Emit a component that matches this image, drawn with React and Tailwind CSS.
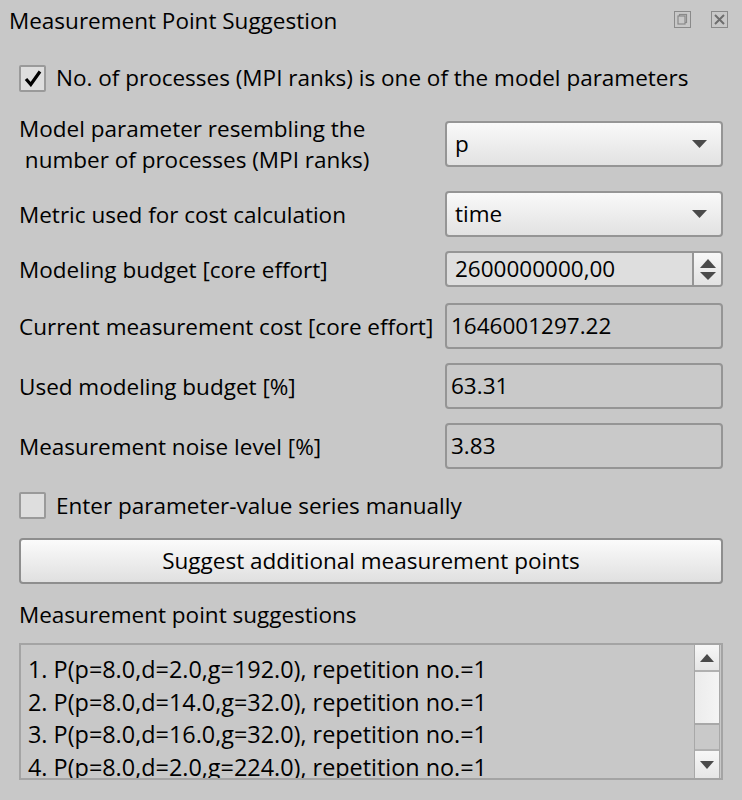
import React from "react";

const font = { fontFamily: '"Open Sans", "Noto Sans", sans-serif' };

function Combo({ value, className = "" }) {
  return (
    <div className={"flex items-center justify-between h-[46px] w-[278px] rounded-[4px] border-2 border-[#959595] bg-gradient-to-b from-[#f9f9f9] to-[#e2e2e2] pl-[8px] pr-[14px] " + className}>
      <span className="text-[22.5px] text-black leading-none">{value}</span>
      <svg width="15" height="8" viewBox="0 0 15 8"><path d="M0 0H15L7.5 8Z" fill="#4a4a4a" /></svg>
    </div>
  );
}

function ReadOnly({ value, className = "" }) {
  return (
    <div className={"flex items-center h-[46px] w-[278px] rounded-[4px] border-2 border-[#959595] bg-[#c9c9c9] pl-[4px] " + className}>
      <span className="text-[22.5px] text-black leading-none">{value}</span>
    </div>
  );
}

function Row({ label, children, className = "" }) {
  return (
    <div className={"flex items-center justify-between " + className}>
      <div className="text-[22.5px] text-black leading-[31px]">{label}</div>
      {children}
    </div>
  );
}

export default function App() {
  return (
    <div className="w-[742px] h-[800px] bg-[#c8c8c8] overflow-hidden" style={font}>
      {/* title bar */}
      <div className="flex items-center justify-between h-[42px] pl-[9px] pr-[14px]">
        <div className="text-[22.5px] text-black leading-[30px]">Measurement Point Suggestion</div>
        <div className="flex items-center gap-[20px] mt-[-4px]">
          <svg width="17" height="17" viewBox="0 0 17 17">
            <rect x="0.5" y="0.5" width="16" height="16" fill="none" stroke="#8a8a8a" strokeWidth="1" />
            <rect x="5.5" y="3.5" width="7" height="8" fill="none" stroke="#8a8a8a" strokeWidth="1.2" />
            <rect x="4" y="5" width="7" height="8" fill="#c8c8c8" stroke="#8a8a8a" strokeWidth="1.2" />
          </svg>
          <svg width="17" height="17" viewBox="0 0 17 17">
            <rect x="0.5" y="0.5" width="16" height="16" fill="none" stroke="#8a8a8a" strokeWidth="1" />
            <path d="M4 4L13 13M13 4L4 13" stroke="#6e6e6e" strokeWidth="2" />
          </svg>
        </div>
      </div>

      <div className="flex flex-col px-[19px]">
        {/* checkbox 1 */}
        <div className="flex items-center mt-[22px] h-[28px]">
          <div className="w-[27px] h-[27px] rounded-[2px] border-2 border-[#9a9a9a] bg-[#dedede] flex items-center justify-center">
            <svg width="18" height="17" viewBox="0 0 18 17"><path d="M2 9L6.8 14.5L16 1.5" fill="none" stroke="#000" strokeWidth="3.2" /></svg>
          </div>
          <span className="ml-[10px] text-[22.5px] text-black leading-[30px]">No. of processes (MPI ranks) is one of the model parameters</span>
        </div>

        <Row className="mt-[21px]" label={<><div>Model parameter resembling the</div><div>&nbsp;number of processes (MPI ranks)</div></>}>
          <Combo value="p" />
        </Row>

        <Row className="mt-[16px]" label="Metric used for cost calculation">
          <Combo value="time" />
        </Row>

        <Row className="mt-[9px] h-[46px]" label="Modeling budget [core effort]">
          <div className="flex items-stretch h-[36px] w-[278px] rounded-[4px] border-2 border-[#959595] bg-[#dedede] overflow-hidden">
            <div className="flex-1 flex items-center pl-[8px] text-[22.5px] text-black">2600000000,00</div>
            <div className="w-[29px] border-l-2 border-[#959595] bg-gradient-to-b from-[#f7f7f7] to-[#e2e2e2] flex flex-col items-center justify-center gap-[4px]">
              <svg width="16" height="9" viewBox="0 0 16 9"><path d="M0 9H16L8 0Z" fill="#4a4a4a" /></svg>
              <svg width="16" height="8" viewBox="0 0 16 8"><path d="M0 0H16L8 8Z" fill="#4a4a4a" /></svg>
            </div>
          </div>
        </Row>

        <Row className="mt-[11px]" label="Current measurement cost [core effort]">
          <ReadOnly value="1646001297.22" />
        </Row>

        <Row className="mt-[14px]" label="Used modeling budget [%]">
          <ReadOnly value="63.31" />
        </Row>

        <Row className="mt-[14px]" label="Measurement noise level [%]">
          <ReadOnly value="3.83" />
        </Row>

        {/* checkbox 2 */}
        <div className="flex items-center mt-[23px] h-[27px]">
          <div className="w-[27px] h-[27px] rounded-[2px] border-2 border-[#9a9a9a] bg-[#dedede]" />
          <span className="ml-[10px] text-[22.5px] text-black leading-[30px]">Enter parameter-value series manually</span>
        </div>

        <button className="mt-[19px] h-[46px] w-full rounded-[4px] border-2 border-[#8e8e8e] bg-gradient-to-b from-[#fbfbfb] to-[#e0e0e0] text-[22.5px] text-black leading-none">
          Suggest additional measurement points
        </button>

        <div className="mt-[16px] text-[22.5px] text-black leading-[30px]">Measurement point suggestions</div>

        {/* list */}
        <div className="mt-[13px] h-[137px] w-full border-2 border-[#a4a4a4] bg-[#c8c8c8] flex overflow-hidden">
          <div className="flex-1 pt-[8px] pl-[7px] text-[23.4px] text-black leading-[32.5px] whitespace-nowrap">
            <div>1. P(p=8.0,d=2.0,g=192.0), repetition no.=1</div>
            <div>2. P(p=8.0,d=14.0,g=32.0), repetition no.=1</div>
            <div>3. P(p=8.0,d=16.0,g=32.0), repetition no.=1</div>
            <div>4. P(p=8.0,d=2.0,g=224.0), repetition no.=1</div>
          </div>
          <div className="w-[26px] shrink-0 mr-[1px] flex flex-col border-x border-[#a8a8a8]">
            <div className="h-[27px] flex items-center justify-center bg-gradient-to-b from-[#f7f7f7] to-[#e6e6e6] border-b-2 border-[#b0b0b0]">
              <svg width="14" height="8" viewBox="0 0 14 8"><path d="M0 8H14L7 0Z" fill="#4a4a4a" /></svg>
            </div>
            <div className="h-[53px] bg-gradient-to-r from-[#ececec] to-[#f4f4f4] border-b-2 border-[#a8a8a8]" />
            <div className="flex-1 bg-[#c9c9c9]" />
            <div className="h-[29px] flex items-center justify-center bg-gradient-to-b from-[#f7f7f7] to-[#e6e6e6] border-t-2 border-[#b0b0b0]">
              <svg width="14" height="8" viewBox="0 0 14 8"><path d="M0 0H14L7 8Z" fill="#4a4a4a" /></svg>
            </div>
          </div>
        </div>
      </div>
    </div>
  );
}
